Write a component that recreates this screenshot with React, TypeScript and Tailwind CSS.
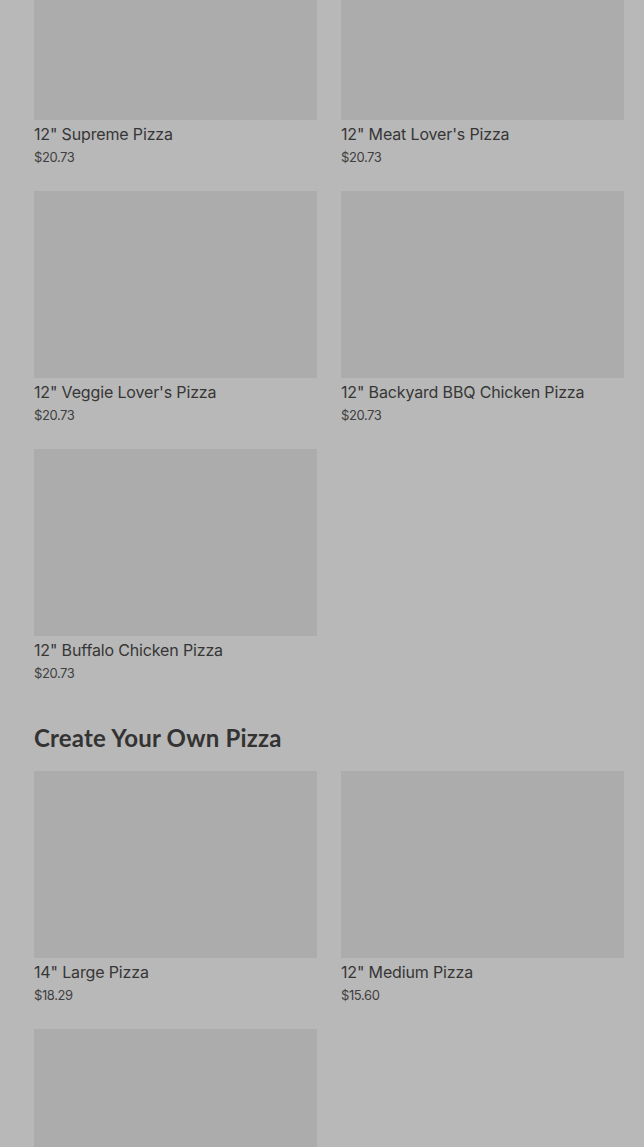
type Pizza = { name: string; price: string };

const specialty: Pizza[] = [
  { name: '12" Supreme Pizza', price: "$20.73" },
  { name: '12" Meat Lover\'s Pizza', price: "$20.73" },
  { name: '12" Veggie Lover\'s Pizza', price: "$20.73" },
  { name: '12" Backyard BBQ Chicken Pizza', price: "$20.73" },
  { name: '12" Buffalo Chicken Pizza', price: "$20.73" },
];

const createYourOwn: Pizza[] = [
  { name: '14" Large Pizza', price: "$18.29" },
  { name: '12" Medium Pizza', price: "$15.60" },
  { name: '10" Small Pizza', price: "$12.99" },
];

function PizzaCard({ pizza }: { pizza: Pizza }) {
  return (
    <div className="flex flex-col">
      <div className="h-[187px] w-full bg-[#acacac]" /> {/* image placeholder */}
      <div className="mt-[2px] text-[16px] leading-[24px] text-[#363636] font-['Inter',sans-serif] tracking-[-0.15px]">
        {pizza.name}
      </div>
      <div className="text-[13px] leading-[22px] text-[#404040] font-['Inter',sans-serif] tracking-[-0.4px]">
        {pizza.price}
      </div>
    </div>
  );
}

export default function App() {
  return (
    <div className="h-[1147px] w-[644px] overflow-hidden bg-[#b8b8b8] pl-[34px] pr-[20px]">
      <div className="mt-[-67px] grid grid-cols-2 gap-x-[24px] gap-y-[23px]">
        {specialty.map((p) => (
          <PizzaCard key={p.name} pizza={p} />
        ))}
      </div>
      <h2 className="mt-[38px] mb-[17px] text-[24px] leading-[32px] font-bold text-[#333] font-['Lato',sans-serif] tracking-[0.2px]">
        Create Your Own Pizza
      </h2>
      <div className="grid grid-cols-2 gap-x-[24px] gap-y-[23px]">
        {createYourOwn.map((p) => (
          <PizzaCard key={p.name} pizza={p} />
        ))}
      </div>
    </div>
  );
}
